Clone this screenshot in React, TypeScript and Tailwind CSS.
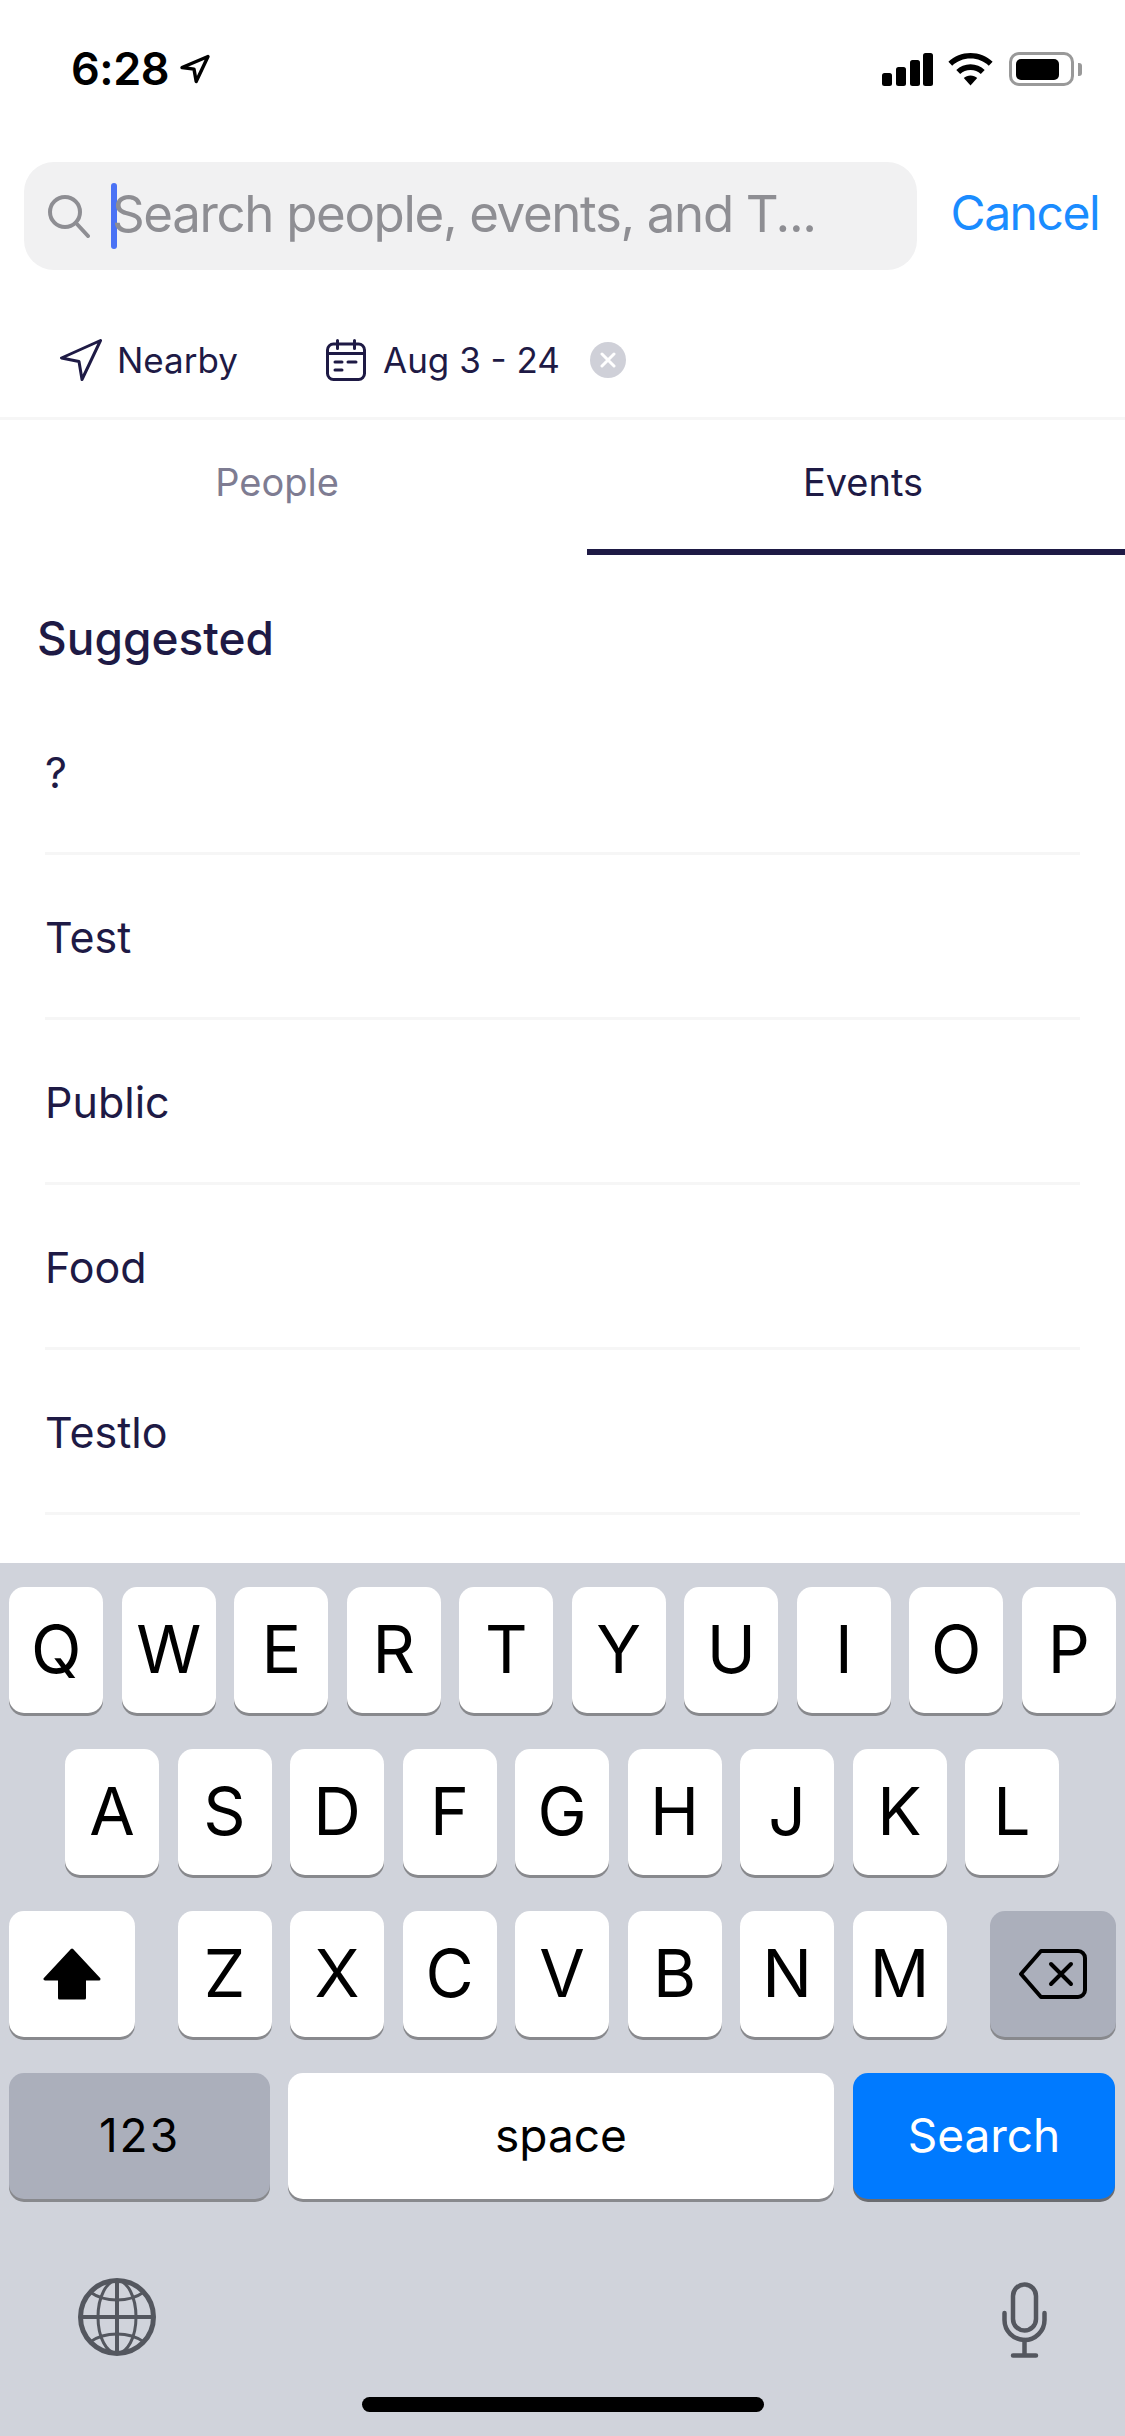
const INK = "text-[#1e1a45]";

function Key({ label }: { label: string }) {
  return (
    <div className="flex h-[126px] w-[94px] items-center justify-center rounded-[15px] bg-white pb-[2px] text-[66px] leading-none font-normal text-black shadow-[0_3px_0_#88898d]">
      {label}
    </div>
  );
}

function KeyRow({ keys, className }: { keys: string[]; className?: string }) {
  return (
    <div className={`flex justify-center gap-[18.5px] ${className ?? ""}`}>
      {keys.map((k) => (
        <Key key={k} label={k} />
      ))}
    </div>
  );
}

function StatusBar() {
  return (
    <div className="flex h-[162px] items-start justify-between pt-[46px] pr-[43px] pl-[71px]">
      <div className="flex items-center gap-[10px]">
        <span className="text-[45px] leading-[45px] font-semibold tracking-[-0.5px] text-black">6:28</span>
        <svg width="32" height="32" viewBox="0 0 32 32" fill="none" stroke="#000" strokeWidth="3.4" strokeLinejoin="round">
          <path d="M29 3.500 3 14.500l12 1.600 2.200 12.400z" />
        </svg>
      </div>
      <div className="mt-[6px] flex items-center">
        <svg width="51" height="33" viewBox="0 0 51 33" fill="#000">
          <rect x="0" y="20" width="10" height="13" rx="2.500" />
          <rect x="14" y="14" width="10" height="19" rx="2.500" />
          <rect x="28" y="7" width="10" height="26" rx="2.500" />
          <rect x="41" y="0" width="10" height="33" rx="2.500" />
        </svg>
        <svg className="ml-[15px]" width="45" height="33" viewBox="0 0 45 33" fill="#000">
          <path d="M22.500 0C14 0 6.300 3.300.4 8.800l3.800 4C9 8.300 15.400 5.600 22.500 5.600s13.500 2.700 18.300 7.200l3.800-4C38.700 3.300 31 0 22.500 0z" />
          <path d="M22.500 11.300c-5.500 0-10.400 2.100-14.200 5.600l3.900 4.100c2.700-2.500 6.300-4 10.300-4s7.600 1.500 10.300 4l3.900-4.100c-3.800-3.500-8.700-5.600-14.200-5.600z" />
          <path d="M22.500 22.500c-2.600 0-5 1-6.700 2.600l6.700 7.400 6.700-7.400c-1.700-1.600-4.100-2.600-6.700-2.600z" />
        </svg>
        <div className="ml-[16px] flex h-[34px] w-[65px] items-center rounded-[10px] border-[3px] border-[#999] px-[4px]">
          <div className="h-[21px] w-[43px] rounded-[5px] bg-black" />
        </div>
        <div className="ml-[4px] h-[13px] w-[4px] rounded-r-[3px] bg-[#999]" />
      </div>
    </div>
  );
}

function SearchBar() {
  return (
    <div className="flex items-center pr-[26px] pl-[24px]">
      <div className="flex h-[108px] w-[893px] items-center rounded-[30px] bg-[#f1f1f2] pl-[24px]">
        <svg width="42" height="43" viewBox="0 0 42 43" fill="none" stroke="#8e8e93" strokeWidth="4" strokeLinecap="round">
          <circle cx="17" cy="17" r="15" />
          <path d="M28 28l12 13" />
        </svg>
        <div className="ml-[21px] h-[66px] w-[6px] rounded-[3px] bg-[#4a72f5]" />
        <span className="-ml-[5px] pb-[6px] text-[51px] leading-none tracking-[-1.35px] whitespace-nowrap text-[#8e8e93]">
          Search people, events, and T...
        </span>
      </div>
      <span className="ml-auto pb-[6px] text-[48px] leading-none tracking-[-1.5px] text-[#1a8cff]">Cancel</span>
    </div>
  );
}

function Filters() {
  return (
    <div className={`flex h-[150px] items-center border-b-[3px] border-[#f6f6f6] pt-[33px] pl-[60px] ${INK}`}>
      <svg width="42" height="42" viewBox="0 0 42 42" fill="none" stroke="#1e1a45" strokeWidth="3" strokeLinejoin="round">
        <path d="M40.500 1.500 1.500 19l17.500 3.500L22 40.500z" />
      </svg>
      <span className="ml-[15px] w-[209px] text-[35px] leading-none">Nearby</span>
      <svg width="40" height="42" viewBox="0 0 40 42" fill="none" stroke="#1e1a45" strokeWidth="3" strokeLinecap="round">
        <rect x="1.500" y="5" width="37" height="35.500" rx="6" />
        <path d="M1.500 14.500h37M11.500 1.500v8M28.500 1.500v8M9 23h7M22 23h8M9 31h7" />
      </svg>
      <span className="ml-[17px] text-[35px] leading-none whitespace-nowrap">Aug 3 - 24</span>
      <div className="ml-[30px] flex h-[36px] w-[36px] items-center justify-center rounded-full bg-[#cfd0d8]">
        <svg width="16" height="16" viewBox="0 0 16 16" stroke="#fff" strokeWidth="3" strokeLinecap="round">
          <path d="M2 2l12 12M14 2 2 14" />
        </svg>
      </div>
    </div>
  );
}

function Tabs() {
  return (
    <div className="flex h-[135px] text-[38px] leading-none">
      <div className="flex w-[587px] items-start justify-center pt-[43px] pr-[33px] text-[#7e7c92]">People</div>
      <div className={`flex flex-1 items-start justify-center border-b-[6px] border-[#1e1a45] pt-[43px] pl-[14px] ${INK}`}>Events</div>
    </div>
  );
}

function Suggested() {
  const rows = ["?", "Test", "Public", "Food", "Testlo"];
  return (
    <div className={INK}>
      <div className="pt-[56px] pl-[37px] text-[46px] leading-[54px] font-medium">Suggested</div>
      <div className="mt-[25px] pr-[45px] pl-[45px]">
        {rows.map((r) => (
          <div key={r} className="flex h-[165px] items-center border-b-[3px] border-[#f6f6f6] pt-[3px] text-[43px] leading-none">
            {r}
          </div>
        ))}
      </div>
    </div>
  );
}

function Keyboard() {
  return (
    <div className="flex h-[873px] flex-col bg-[#d0d3db] pt-[24px]">
      <div className="flex flex-col gap-[36px]">
        <KeyRow keys={["Q", "W", "E", "R", "T", "Y", "U", "I", "O", "P"]} />
        <KeyRow keys={["A", "S", "D", "F", "G", "H", "J", "K", "L"]} className="pr-[1px]" />
        <div className="flex justify-between pr-[9px] pl-[9px]">
          <div className="flex h-[126px] w-[126px] items-center justify-center rounded-[15px] bg-white shadow-[0_3px_0_#88898d]">
            <svg width="58" height="52" viewBox="0 0 58 52" fill="#000" stroke="#000" strokeWidth="3" strokeLinejoin="round">
              <path d="M29 2 2 31h14.500v19h25V31H56z" />
            </svg>
          </div>
          <div className="-ml-[1px] flex gap-[18.5px]">
            {["Z", "X", "C", "V", "B", "N", "M"].map((k) => (
              <Key key={k} label={k} />
            ))}
          </div>
          <div className="flex h-[126px] w-[126px] items-center justify-center rounded-[15px] bg-[#abafbb] shadow-[0_3px_0_#88898d]">
            <svg width="68" height="50" viewBox="0 0 68 50" fill="none" stroke="#000" strokeWidth="4" strokeLinejoin="round" strokeLinecap="round">
              <path d="M22 2h37a7 7 0 0 1 7 7v32a7 7 0 0 1-7 7H22L2 25z" />
              <path d="M32 15l20 20M52 15 32 35" />
            </svg>
          </div>
        </div>
        <div className="flex gap-[18px] pl-[9px]">
          <div className="flex h-[126px] w-[261px] items-center justify-center rounded-[15px] bg-[#abafbb] pb-[2px] text-[46px] leading-none tracking-[2px] text-black shadow-[0_3px_0_#88898d]">
            123
          </div>
          <div className="flex h-[126px] w-[546px] items-center justify-center rounded-[15px] bg-white pb-[2px] text-[46px] leading-none text-black shadow-[0_3px_0_#88898d]">
            space
          </div>
          <div className="ml-[1px] flex h-[126px] w-[262px] items-center justify-center rounded-[15px] bg-[#007aff] pb-[2px] text-[46px] leading-none text-white shadow-[0_3px_0_#6b6c70]">
            Search
          </div>
        </div>
      </div>
      <div className="mt-[79px] flex items-start justify-between pr-[78px] pl-[78px]">
        <svg width="78" height="78" viewBox="0 0 78 78" fill="none" stroke="#54575f" strokeWidth="3">
          <circle cx="39" cy="39" r="36.500" strokeWidth="5" />
          <ellipse cx="39" cy="39" rx="19" ry="36.500" />
          <path d="M39 2v74M2 39h74" strokeWidth="4" />
          <path d="M12 14c7 5 16 8 27 8s20-3 27-8M12 64c7-5 16-8 27-8s20 3 27 8" />
        </svg>
        <svg className="mt-[4px]" width="45" height="76" viewBox="0 0 45 76" fill="none" stroke="#54575f" strokeWidth="4.500" strokeLinecap="round">
          <rect x="11" y="2.500" width="23" height="46" rx="11.500" />
          <path d="M2.500 31v7c0 11 9 20 20 20s20-9 20-20v-7" />
          <path d="M22.500 58v15M11 73.500h23" />
        </svg>
      </div>
      <div className="mt-[39px] flex justify-center">
        <div className="h-[15px] w-[402px] rounded-full bg-black" />
      </div>
    </div>
  );
}

export default function App() {
  return (
    <div className="flex h-[2436px] w-[1125px] flex-col overflow-hidden bg-white font-['Inter',sans-serif]">
      <div className="min-h-0 flex-1">
        <StatusBar />
        <SearchBar />
        <Filters />
        <Tabs />
        <Suggested />
      </div>
      <Keyboard />
    </div>
  );
}
